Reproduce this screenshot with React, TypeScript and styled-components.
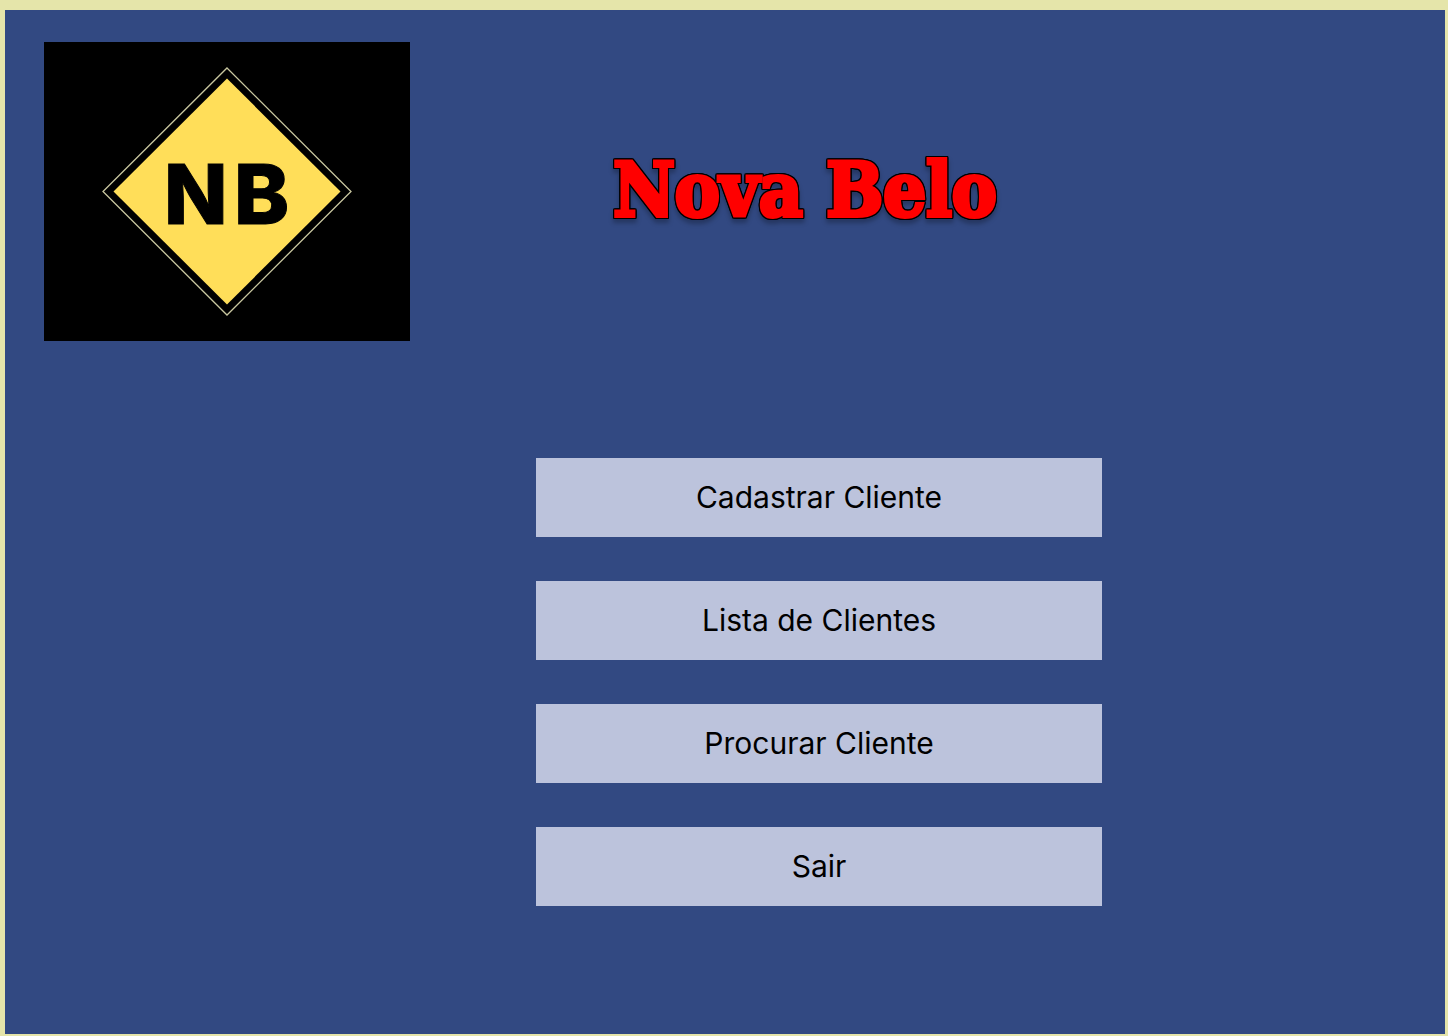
import React from "react";
import styled, { createGlobalStyle } from "styled-components";

const GlobalStyle = createGlobalStyle`
  * { box-sizing: border-box; }
  body {
    margin: 0;
    background: #e5e5aa;
    font-family: Inter, "Liberation Sans", sans-serif;
  }
`;

const Frame = styled.div`
  display: flex;
  min-height: 100vh;
  padding: 10px 3px 2px 5px;
`;

const Screen = styled.main`
  flex: 1;
  background: #324982;
`;

const Header = styled.header`
  display: grid;
  grid-template-columns: 366px minmax(0, 790fr) minmax(0, 245fr);
  align-items: center;
  padding: 32px 0 0 39px;
`;

const Logo = styled.svg`
  display: block;
  width: 366px;
  height: 299px;
  background: #000000;
`;

const Initials = styled.text`
  font-family: Inter, sans-serif;
  font-size: 83px;
  font-weight: 800;
  fill: #000000;
`;

const Title = styled.h1`
  margin: 0;
  padding-bottom: 4px;
  text-align: center;
  white-space: nowrap;
  font-family: "DejaVu Serif Condensed", "DejaVu Serif", serif;
  font-stretch: condensed;
  font-size: 75px;
  line-height: 96px;
  font-weight: 700;
  color: #ff0000;
  -webkit-text-stroke: 4px #ff0000;
  stroke-linejoin: round;
  filter: drop-shadow(1px 0 0 #000000) drop-shadow(-1px 0 0 #000000)
    drop-shadow(0 1px 0 #000000) drop-shadow(0 -1px 0 #000000)
    drop-shadow(0 4px 2px rgba(0, 0, 0, 0.25));
`;

const Menu = styled.nav`
  display: grid;
  grid-template-columns: 531fr 566fr 343fr;
  row-gap: 44px;
  padding: 117px 0 64px;
`;

const MenuButton = styled.button`
  grid-column: 2;
  height: 79px;
  padding: 0 0 2px;
  border: 0;
  background: #bcc3dc;
  color: #000000;
  font-family: inherit;
  font-size: 30px;
  line-height: 36px;
  cursor: pointer;
`;

const actions = ["Cadastrar Cliente", "Lista de Clientes", "Procurar Cliente", "Sair"];

export default function App() {
  return (
    <>
      <GlobalStyle />
      <Frame>
        <Screen>
          <Header>
            <Logo viewBox="0 0 366 299" role="img" aria-label="Logo NB">
              <path d="M183 26 L307 149.500 L183 273 L59 149.500 Z" fill="#000" stroke="#c9c7a0" strokeWidth="1.300" />
              <path d="M183 36.500 L296.500 149.500 L183 262.500 L69.500 149.500 Z" fill="#ffde59" />
              <Initials x="120 190" y="182" stroke="#000" strokeWidth="1">NB</Initials>
            </Logo>
            <Title>Nova Belo</Title>
          </Header>
          <Menu>
            {actions.map((label) => (
              <MenuButton key={label} type="button">{label}</MenuButton>
            ))}
          </Menu>
        </Screen>
      </Frame>
    </>
  );
}
